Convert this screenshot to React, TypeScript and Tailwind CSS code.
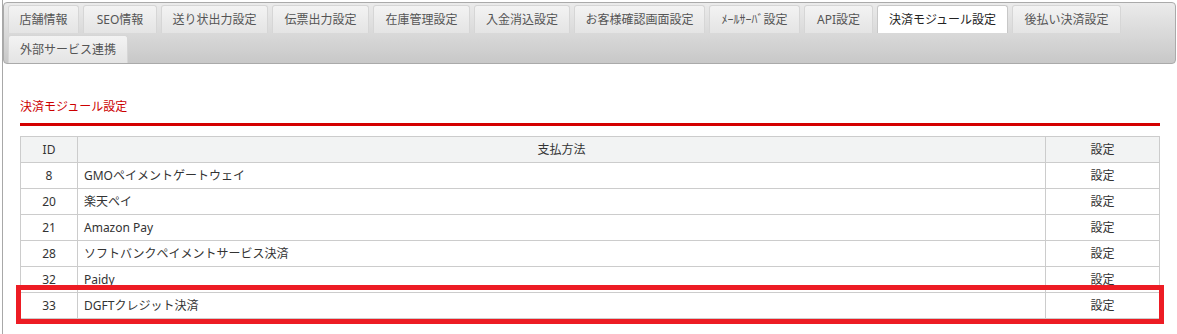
import clsx from "clsx";

const tabs = [
  { label: "店舗情報", w: "w-[71px]" },
  { label: "SEO情報", w: "w-[74px]" },
  { label: "送り状出力設定", w: "w-[107px]" },
  { label: "伝票出力設定", w: "w-[97px]" },
  { label: "在庫管理設定", w: "w-[97px]" },
  { label: "入金消込設定", w: "w-[96px]" },
  { label: "お客様確認画面設定", w: "w-[131px]" },
  { label: "ﾒｰﾙｻｰﾊﾞ設定", w: "w-[91px]" },
  { label: "API設定", w: "w-[69px]" },
  { label: "決済モジュール設定", w: "w-[131px]" },
  { label: "後払い決済設定", w: "w-[109px]" },
  { label: "外部サービス連携", w: "w-[120px]" },
];

const active = "決済モジュール設定";

const rows = [
  { id: 8, name: "GMOペイメントゲートウェイ" },
  { id: 20, name: "楽天ペイ" },
  { id: 21, name: "Amazon Pay" },
  { id: 28, name: "ソフトバンクペイメントサービス決済" },
  { id: 32, name: "Paidy" },
  { id: 33, name: "DGFTクレジット決済" },
];

export default function App() {
  return (
    <div
      className="ml-[2px] min-h-[334px] border-l border-[#a8a8a8] bg-white text-[12px] text-[#333]"
      style={{ fontFamily: '"Noto Sans", "Noto Sans CJK JP", sans-serif' }}
    >
      <div className="pt-[2px] pr-[1px]">
        <div className="flex flex-wrap gap-x-[4px] gap-y-[2px] rounded-[4px] border border-[#aaa] bg-gradient-to-b from-[#ebebeb] to-[#c8c8c8] pl-[4px] pt-[2px]">
          {tabs.map((t) => (
            <div
              key={t.label}
              className={clsx(
                "flex h-[28px] items-center justify-center rounded-t-[3px] border border-b-0 leading-none",
                t.w,
                t.label === active
                  ? "border-[#c8c8c8] bg-white text-[#222]"
                  : "border-[#d6d6d6] bg-gradient-to-b from-[#f3f3f3] to-[#e4e4e4] text-[#555]"
              )}
            >
              {t.label}
            </div>
          ))}
        </div>
      </div>

      <div className="px-[17px] pt-[35px]">
        <h2 className="text-[12px] leading-[16px] font-normal text-[#cc0000]">決済モジュール設定</h2>
        <div className="mt-[8px] h-[3px] bg-[#d40000]" />

        <div className="relative mt-[10px]">
          <table className="w-full border-collapse">
            <thead>
              <tr className="bg-[#f2f3f3]">
                <th className="h-[26px] w-[57px] border border-[#ccc] font-normal">ID</th>
                <th className="h-[26px] border border-[#ccc] font-normal">支払方法</th>
                <th className="h-[26px] w-[114px] border border-[#ccc] font-normal">設定</th>
              </tr>
            </thead>
            <tbody>
              {rows.map((r) => (
                <tr key={r.id}>
                  <td className="h-[26px] border border-[#ccc] text-center">{r.id}</td>
                  <td className="h-[26px] border border-[#ccc] px-[6px]">{r.name}</td>
                  <td className="h-[26px] border border-[#ccc] text-center">設定</td>
                </tr>
              ))}
            </tbody>
          </table>
          <div className="pointer-events-none absolute right-[-4px] bottom-[-5px] left-[-4px] h-[39px] border-[5px] border-[#ed1c24]" />
        </div>
      </div>
    </div>
  );
}
